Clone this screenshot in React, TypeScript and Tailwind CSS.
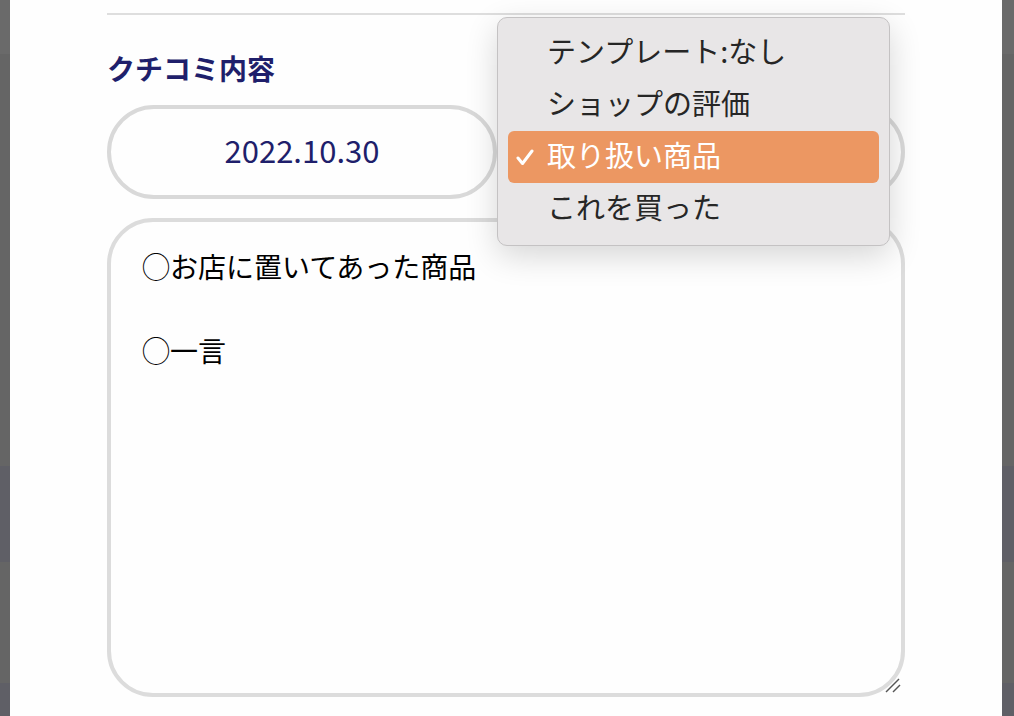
import React from "react";

const FONT = '"Noto Sans CJK JP", "Noto Sans", sans-serif';

const templates = ["テンプレート:なし", "ショップの評価", "取り扱い商品", "これを買った"];
const selected = 2;

const body = "◯お店に置いてあった商品\n\n◯一言";

// macOS風のセレクトポップアップ
const TemplateMenu = () => (
  <div className="absolute left-[497px] top-[17px] w-[393px] rounded-[10px] border border-[#c4c2c3] bg-[#e8e6e7] px-[10px] pt-[9px] pb-[10px] shadow-[0_10px_32px_rgba(0,0,0,0.16)]">
    {templates.map((t, i) => (
      <div
        key={t}
        className={
          i === selected
            ? "flex h-[52px] items-center rounded-[6px] bg-[#ec9762] text-white"
            : "flex h-[52px] items-center text-[#262626]"
        }
      >
        <span className="flex w-[39px] shrink-0 justify-start pl-[8px]">
          {i === selected && (
            <svg width="18" height="16" viewBox="0 0 18 16" fill="none">
              <path d="M2 9 L6.5 14.5 L16 2" stroke="white" strokeWidth="3" strokeLinecap="round" strokeLinejoin="round" />
            </svg>
          )}
        </span>
        <span className="pb-[5px] text-[29px] leading-none">{t}</span>
      </div>
    ))}
  </div>
);

export default function App() {
  return (
    <div
      className="relative h-[716px] w-[1014px] overflow-hidden bg-[linear-gradient(to_bottom,#6a6a6a_0px,#6a6a6a_54px,#656565_54px,#656565_466px,#5f5f66_466px,#5f5f66_562px,#656565_562px,#656565_683px,#5f5f66_683px)] pl-[10px] pr-[12px]"
      style={{ fontFamily: FONT }}
    >
      <div className="h-full bg-[#fefefe] px-[97px] pt-[13px]">
        <div className="h-[2px] bg-[#dedede]" />

        <h2 className="mt-[34px] h-[40px] text-[28px] font-bold leading-[38px] text-[#1f1f6b]">クチコミ内容</h2>

        <div className="mt-[16px] grid grid-cols-2 gap-[18px]">
          <div className="flex h-[94px] items-center justify-center rounded-full border-4 border-[#d9d9d9] pb-[3px] text-[31px] text-[#1f1f6b]">
            2022.10.30
          </div>
          <div className="h-[94px] rounded-full border-4 border-[#d9d9d9]" />
        </div>

        <div className="relative mt-[19px]">
          <textarea
            readOnly
            defaultValue={body}
            className="block h-[479px] w-full resize-none rounded-[46px] border-4 border-[#dcdcdc] bg-transparent pl-[31px] pr-[24px] pt-[23px] text-[28px] leading-[42px] text-black outline-none"
            style={{ fontFamily: FONT }}
          />
          <svg className="absolute bottom-[4px] right-[4px]" width="16" height="15" viewBox="0 0 16 15">
            <path d="M1 14 L14 1" stroke="#555" strokeWidth="1.4" />
            <path d="M8 14 L15 7" stroke="#555" strokeWidth="1.4" />
          </svg>
        </div>
      </div>

      <TemplateMenu />
    </div>
  );
}
